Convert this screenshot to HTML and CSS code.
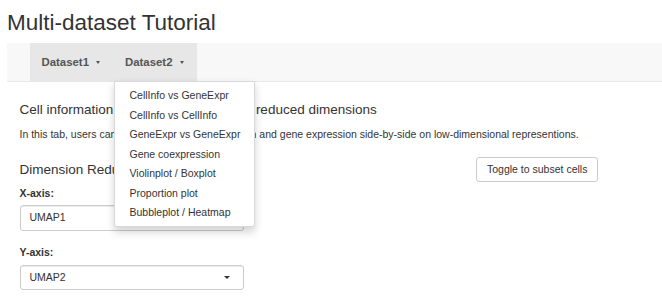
FILE: index.html
```html
<!DOCTYPE html>
<html lang="en">

<head>
    <meta charset="UTF-8">
    <meta name="viewport" content="width=device-width, initial-scale=1.0">
    <title>Multi-dataset Tutorial</title>
    <link rel="stylesheet" href="styles.css">
</head>

<body>
    <div class="page">
        <h2 class="title">Multi-dataset Tutorial</h2>

        <nav class="navbar">
            <ul class="nav">
                <li class="nav-item active">
                    <a class="nav-link">Dataset1<span class="caret"></span></a>
                </li>
                <li class="nav-item open">
                    <a class="nav-link">Dataset2<span class="caret"></span></a>
                    <ul class="dropdown-menu">
                        <li><a>CellInfo vs GeneExpr</a></li>
                        <li><a>CellInfo vs CellInfo</a></li>
                        <li><a>GeneExpr vs GeneExpr</a></li>
                        <li><a>Gene coexpression</a></li>
                        <li><a>Violinplot / Boxplot</a></li>
                        <li><a>Proportion plot</a></li>
                        <li><a>Bubbleplot / Heatmap</a></li>
                    </ul>
                </li>
            </ul>
        </nav>

        <div class="tab-content">
            <h4 class="section-title">Cell information vs gene expression on reduced dimensions</h4>
            <p class="intro">In this tab, users can visualise both cell information and gene expression side-by-side on low-dimensional representions.</p>

            <div class="dimred">
                <div class="dimred-inputs">
                    <h4 class="sub-title">Dimension Reduction</h4>
                    <div class="form-group">
                        <label>X-axis:</label>
                        <div class="select"><span>UMAP1</span><span class="select-caret"></span></div>
                    </div>
                    <div class="form-group">
                        <label>Y-axis:</label>
                        <div class="select"><span>UMAP2</span><span class="select-caret"></span></div>
                    </div>
                </div>
                <div class="dimred-toggle">
                    <button class="btn">Toggle to subset cells</button>
                </div>
            </div>
        </div>
    </div>
</body>

</html>
```

FILE: styles.css
```css
body {
    margin: 0;
    background-color: white;
    color: #333;
    font-family: 'Liberation Sans', Arial, sans-serif;
    font-size: 10.5px;
    line-height: 15px;
    overflow: hidden;
}

.page {
    padding-left: 7px;
}

.title {
    margin: 10px 0 8px;
    font-size: 22.5px;
    font-weight: normal;
    line-height: 25px;
}

/* navbar */
.navbar {
    height: 38px;
    background-color: #f8f8f8;
    border-bottom: 1px solid #e7e7e7;
    padding-left: 23px;
}

.nav {
    display: flex;
    height: 38px;
    margin: 0;
    padding: 0;
    list-style: none;
}

.nav-item {
    position: relative;
}

.nav-item.active,
.nav-item.open {
    background-color: #e7e7e7;
}

.nav-link {
    display: flex;
    align-items: center;
    height: 38px;
    padding: 0 13.5px 0 11.5px;
    color: #555;
    font-size: 11.4px;
    font-weight: bold;
    cursor: pointer;
}

.caret {
    width: 0;
    height: 0;
    margin-left: 7px;
    border-top: 3px solid;
    border-left: 2.5px solid transparent;
    border-right: 2.5px solid transparent;
}

.dropdown-menu {
    position: absolute;
    top: 100%;
    left: 0;
    z-index: 10;
    box-sizing: border-box;
    width: 141.5px;
    margin: 0;
    padding: 3.75px 0;
    list-style: none;
    background-color: white;
    border: 1px solid rgba(0, 0, 0, 0.15);
    border-radius: 0 0 3px 3px;
    box-shadow: 0 4.5px 9px rgba(0, 0, 0, 0.175);
}

.dropdown-menu a {
    display: block;
    padding: 2.25px 15px;
    color: #333;
    white-space: nowrap;
}

/* tab content */
.tab-content {
    padding: 0 12.5px;
}

.section-title,
.sub-title {
    font-size: 13.5px;
    font-weight: normal;
    line-height: 14.85px;
}

.section-title {
    margin: 21px 0 9px;
}

.intro {
    margin: 0;
}

.dimred {
    display: flex;
    margin-top: 15px;
}

.dimred-inputs {
    width: 224.5px;
}

.sub-title {
    margin: 6px 0 8px;
}

.form-group {
    margin-bottom: 14.7px;
}

.form-group label {
    display: block;
    margin-bottom: 4.5px;
    font-weight: bold;
}

.select {
    display: flex;
    align-items: center;
    justify-content: space-between;
    box-sizing: border-box;
    height: 25.5px;
    padding: 0 13px 0 9px;
    border: 1px solid #ccc;
    border-radius: 3px;
    box-shadow: inset 0 1px 1px rgba(0, 0, 0, 0.075);
}

.select-caret {
    width: 0;
    height: 0;
    border-top: 3.5px solid #333;
    border-left: 3px solid transparent;
    border-right: 3px solid transparent;
}

.dimred-toggle {
    margin-left: 232px;
}

.btn {
    box-sizing: border-box;
    height: 25.3px;
    padding: 0 10px;
    font-family: inherit;
    font-size: 10.5px;
    color: #333;
    background-color: white;
    border: 1px solid #ccc;
    border-radius: 3px;
    cursor: pointer;
}
```
